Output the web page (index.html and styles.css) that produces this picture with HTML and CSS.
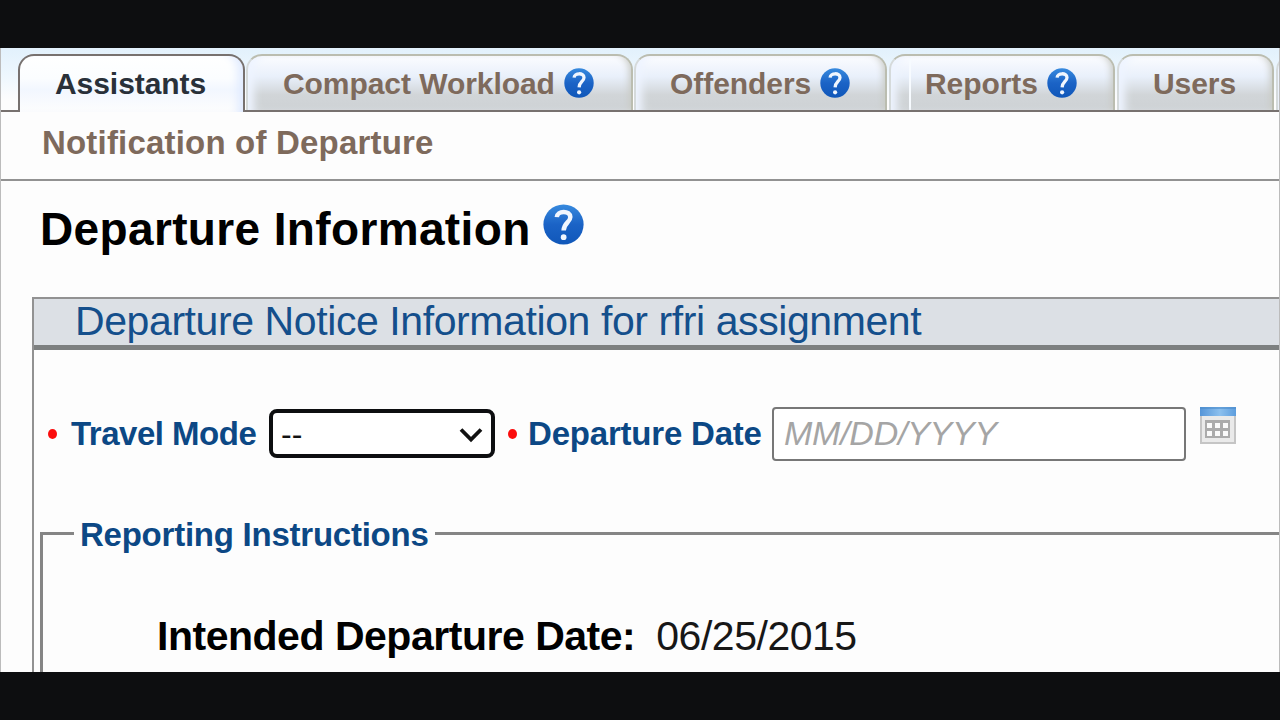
FILE: index.html
```html
<!DOCTYPE html>
<html lang="en">
<head>
<meta charset="utf-8">
<title>Departure Information</title>
<link rel="stylesheet" href="styles.css">
</head>
<body>
<svg class="defs" width="0" height="0">
  <defs>
    <linearGradient id="ball" x1="0" y1="0" x2="0" y2="1">
      <stop offset="0" stop-color="#378ade"/><stop offset=".5" stop-color="#1b63c6"/><stop offset="1" stop-color="#1057b9"/>
    </linearGradient>
    <linearGradient id="calbar" x1="0" y1="0" x2="1" y2="0">
      <stop offset="0" stop-color="#5595d8"/><stop offset=".55" stop-color="#8cc0ee"/><stop offset="1" stop-color="#5d9ddd"/>
    </linearGradient>
    <symbol id="help" viewBox="0 0 30 30" preserveAspectRatio="none">
      <circle cx="15" cy="15" r="14.7" fill="url(#ball)"/>
      <path d="M10.1 9.6C10.3 4.6 19.9 4.4 20 9.6C20 13.4 15.2 13.8 15.1 19.4" fill="none" stroke="#f0f6fe" stroke-width="3.3"/>
      <circle cx="15.1" cy="24.3" r="2.1" fill="#f0f6fe"/>
    </symbol>
  </defs>
</svg>
<main class="page">
  <nav class="tabs">
    <div class="tab active">Assistants</div>
    <div class="tab compact">Compact Workload <svg class="help"><use href="#help"/></svg></div>
    <div class="tab offenders">Offenders <svg class="help"><use href="#help"/></svg></div>
    <div class="tab reports">Reports <svg class="help"><use href="#help"/></svg></div>
    <div class="tab users">Users</div>
    <div class="tab next"></div>
  </nav>
  <div class="subnav">Notification of Departure</div>
  <h1 class="title"><span>Departure Information</span><svg class="help-large"><use href="#help"/></svg></h1>
  <section class="panel">
    <h2 class="panel-title">Departure Notice Information for rfri assignment</h2>
    <div class="form-row">
      <i class="dot"></i>
      <span class="label travel">Travel Mode</span>
      <div class="select"><span>--</span><svg width="24" height="16" viewBox="0 0 24 16"><path d="M2 2.5L12 12.5L22 2.5" fill="none" stroke="#111" stroke-width="3.8"/></svg></div>
      <i class="dot second"></i>
      <span class="label departure">Departure Date</span>
      <div class="date">MM/DD/YYYY</div>
      <svg class="calendar" width="36" height="37" viewBox="0 0 36 37">
        <rect x="1" y="1" width="34" height="35" fill="#eaeaea" stroke="#c5c5c5" stroke-width="2"/>
        <rect width="36" height="9" fill="url(#calbar)"/>
        <path d="M0 1H36" stroke="#4b8ccc" stroke-opacity=".6" stroke-width="2"/>
        <rect x="5" y="13" width="25" height="18" fill="#ababab"/>
        <g fill="#fafafa"><path d="M7 16h5v5H7zM15 16h5v5h-5zM23 16h5v5h-5zM7 24h5v5H7zM15 24h5v5h-5zM23 24h5v5h-5z"/></g>
      </svg>
    </div>
    <div class="fieldset">
      <div class="legend"><span>Reporting Instructions</span></div>
      <div class="entry"><b>Intended Departure Date:</b><span>06/25/2015</span></div>
    </div>
  </section>
</main>
</body>
</html>
```
FILE: styles.css
```css
* { box-sizing: border-box; }
body {
  margin: 0;
  padding: 48px 0;
  width: 1280px;
  height: 720px;
  overflow: hidden;
  background: #0d0e10;
  font-family: "Liberation Sans", Arial, sans-serif;
  white-space: nowrap;
}
.defs { display: block; }
.page {
  height: 624px;
  overflow: hidden;
  background: #fdfdfd;
  border-left: 1px solid #bcbcbc;
  border-right: 1px solid #bcbcbc;
}
.tabs {
  display: flex;
  gap: 2px;
  height: 64px;
  padding: 6px 0 0 17px;
  border-bottom: 2px solid #77716f;
  background: linear-gradient(#e2f1fc, #eef7fe 45%, #fdfdfd 85%);
}
.tab {
  display: flex;
  flex: none;
  height: 56px;
  border: 2px solid #bbbdb0;
  border-left-color: #d5dadb;
  border-bottom: 0;
  border-radius: 16px 16px 0 0;
  background: linear-gradient(#fbfcff 0, #e9f0fb 38%, #d1d5d8 72%, #ced2d5);
  box-shadow: inset 10px 0 9px -4px #eef4ff, inset -6px 0 7px -4px #c9cbc6;
  color: #7e6a5c;
  font-size: 30px;
  font-weight: bold;
  letter-spacing: -.06px;
  line-height: 56px;
}
.tab.active {
  width: 227px;
  height: 58px;
  margin-right: -1px;
  padding-left: 35px;
  border-color: #77716f;
  background: linear-gradient(#fff 0, #fbfdff 40%, #f2f7ff 60%, #fdfdfd);
  box-shadow: inset -10px 0 10px -5px #dfeaff;
  color: #293039;
}
.compact { width: 387px; padding-left: 35px; }
.offenders { width: 253px; padding-left: 34px; margin-left: -1px; }
.reports {
  width: 226px;
  padding-left: 34px;
  background: linear-gradient(#f7fbff, #f7fbff) 18px 0 / 2px 100% no-repeat,
    linear-gradient(#fbfcff 0, #e9f0fb 38%, #d1d5d8 72%, #ced2d5);
}
.users { width: 157px; padding-left: 34px; }
.next { width: 60px; }
.help { width: 30px; height: 30px; margin: 12px 0 0 9px; }
.subnav {
  height: 69px;
  padding-left: 41px;
  border-bottom: 2px solid #929292;
  color: #7e6a5c;
  font-size: 33px;
  font-weight: bold;
  letter-spacing: .19px;
  line-height: 62px;
}
.title {
  display: flex;
  height: 116px;
  margin: 0;
  padding-left: 39px;
  color: #000;
  font-size: 46px;
  letter-spacing: .36px;
  line-height: 97px;
}
.help-large { width: 41px; height: 41px; margin: 23px 0 0 12px; }
.panel {
  height: 400px;
  margin-left: 31px;
  border: 2px solid #929292;
  border-right: 0;
}
.panel-title {
  height: 51px;
  margin: 0;
  padding-left: 41px;
  border-bottom: 5px solid #7d8080;
  background: #dce0e5;
  color: #144f8c;
  font-size: 41px;
  font-weight: normal;
  letter-spacing: -.41px;
  line-height: 45px;
}
.form-row {
  display: flex;
  height: 182px;
  padding: 57px 0 0 14px;
}
.dot {
  flex: none;
  width: 9px;
  height: 10px;
  margin-top: 22px;
  border-radius: 50%;
  background: #fb0d0d;
}
.dot.second { margin-left: 13px; }
.label {
  flex: none;
  color: #0c4885;
  font-size: 33px;
  font-weight: bold;
  line-height: 54px;
}
.travel { width: 212px; padding-left: 14px; letter-spacing: -.5px; }
.departure { width: 255px; padding-left: 11px; letter-spacing: -.2px; }
.select {
  display: flex;
  justify-content: space-between;
  flex: none;
  width: 226px;
  height: 49px;
  margin-top: 2px;
  padding: 0 8px;
  border: 4px solid #0d0e10;
  border-radius: 8px;
  background: #fff;
  color: #111;
  font-size: 32px;
  line-height: 42px;
}
.select svg { margin-top: 14px; }
.date {
  flex: none;
  width: 414px;
  height: 54px;
  padding-left: 10px;
  border: 2px solid #777;
  border-radius: 4px;
  background: #fff;
  color: #a5a5a5;
  font-size: 34px;
  font-style: italic;
  letter-spacing: -.25px;
  line-height: 49px;
}
.calendar { flex: none; margin-left: 14px; }
.fieldset {
  height: 300px;
  margin-left: 6px;
  border: 3px solid #858585;
  border-right: 0;
}
.legend { height: 60px; margin-top: -22px; padding-left: 31px; }
.legend span {
  display: inline-block;
  padding: 0 6px;
  background: #fdfdfd;
  color: #0c4885;
  font-size: 33px;
  font-weight: bold;
  letter-spacing: -.24px;
  line-height: 44px;
}
.entry {
  display: flex;
  gap: 21px;
  padding: 33px 0 0 114px;
  color: #000;
  font-size: 41px;
  letter-spacing: -.48px;
  line-height: 60px;
}
.entry span { color: #171717; }
```
